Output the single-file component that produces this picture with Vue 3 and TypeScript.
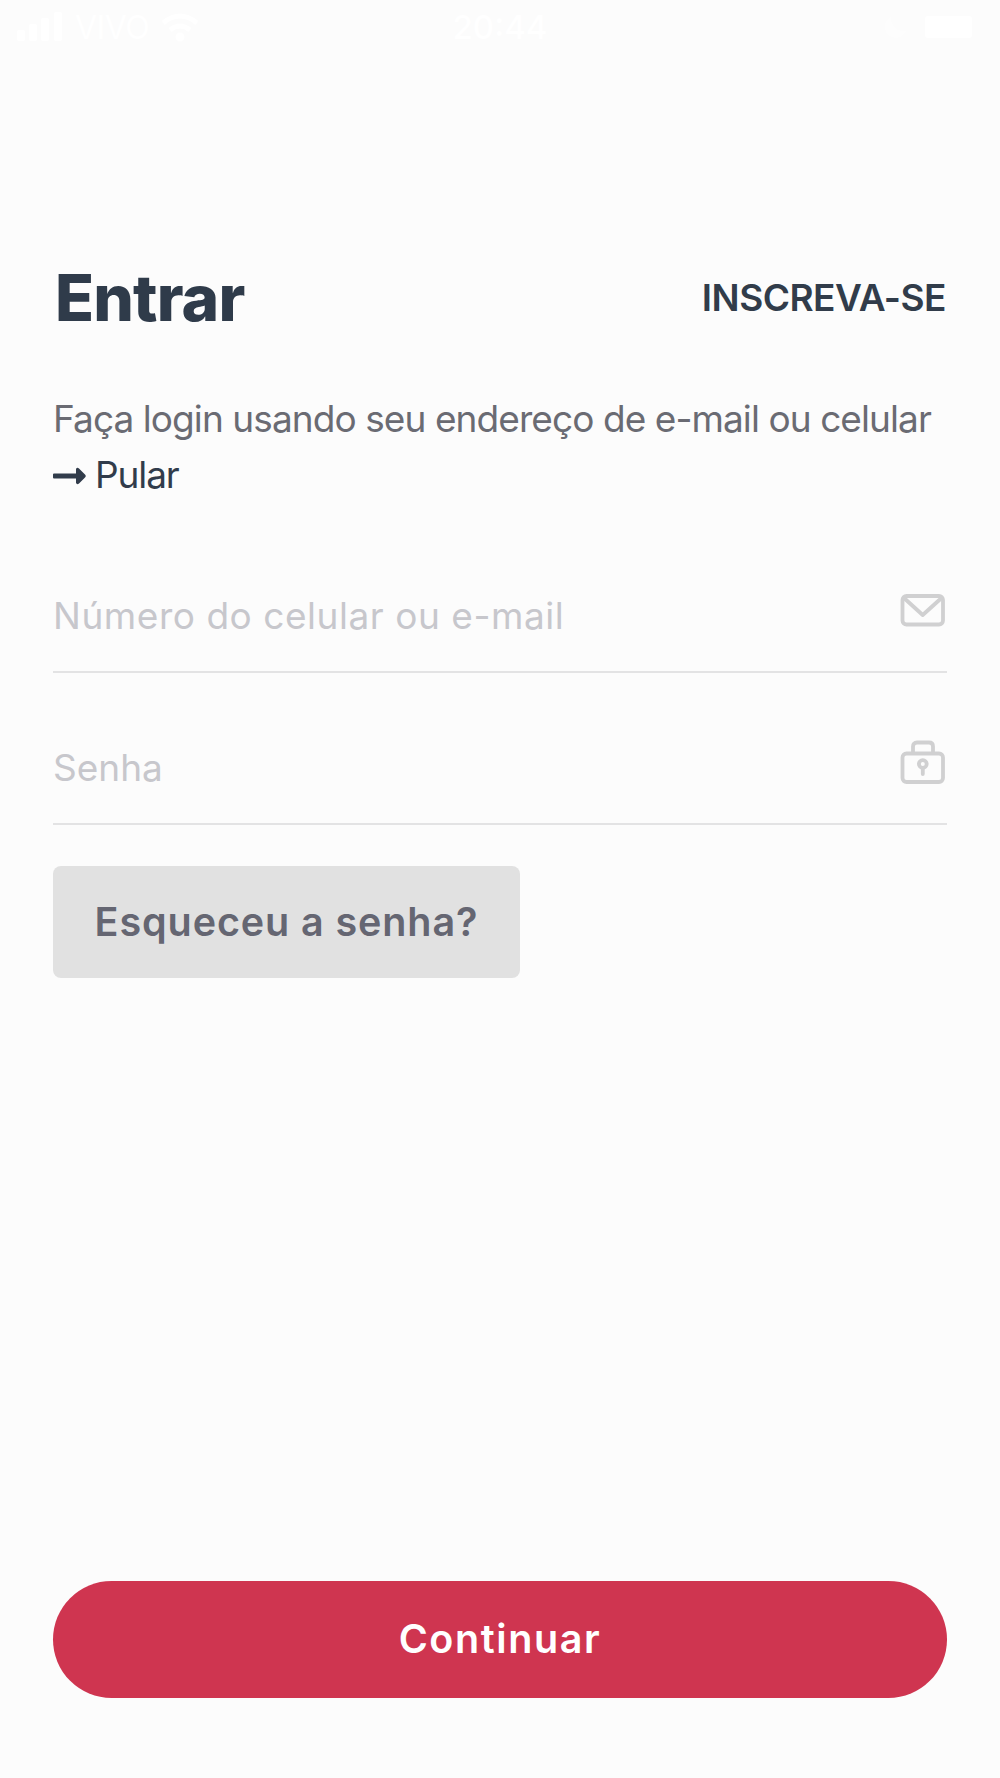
<script setup lang="ts">
import { ref } from 'vue'

const login = ref('')
const password = ref('')
</script>

<template>
  <main class="screen">
    <header class="status">
      <div class="carrier">
        <svg width="46" height="30" viewBox="0 0 46 30" fill="#fff">
          <rect x="0" y="18" width="8" height="11" rx="2" />
          <rect x="12" y="12" width="8" height="17" rx="2" />
          <rect x="24" y="6" width="8" height="23" rx="2" />
          <rect x="37" y="0" width="8" height="29" rx="2" />
        </svg>
        <span class="name">VIVO</span>
        <svg width="38" height="29" viewBox="0 0 38 29" fill="none" stroke="#fff" stroke-width="5">
          <path d="M2 10Q19-4 36 10" />
          <path d="M9 17Q19 9 29 17" />
          <circle cx="19" cy="24" r="2" fill="#fff" />
        </svg>
      </div>
      <span class="clock">20:44</span>
      <div class="power">
        <svg width="90" height="30" viewBox="0 0 90 30" fill="#fff">
          <path d="M6 5A11 11 0 1 0 21 19A13 13 0 0 1 6 5Z" opacity=".4" />
          <rect x="40" y="4" width="47" height="22" rx="3" />
        </svg>
      </div>
    </header>

    <section class="heading">
      <h1>Entrar</h1>
      <a class="signup">INSCREVA-SE</a>
    </section>

    <p class="intro">Faça login usando seu endereço de e-mail ou celular</p>
    <a class="skip">
      <svg width="33" height="18" viewBox="0 0 33 18" fill="#313c4b">
        <path d="M1 6.500H23V2Q24 0 26 1.500L32 7.500Q33.500 9 32 10.500L26 16.500Q24 18 23 16V11.500H1Q0 11.500 0 10.500V7.500Q0 6.500 1 6.500Z" />
      </svg>
      <span>Pular</span>
    </a>

    <label class="field">
      <input v-model="login" class="login" type="text" placeholder="Número do celular ou e-mail" />
      <svg class="icon" width="46" height="46" viewBox="0 0 46 46" fill="none" stroke="#d0d0d1" stroke-width="3.800" stroke-linejoin="round">
        <rect x="2.500" y="9" width="40.500" height="28.500" rx="4" />
        <path d="M4 11L22.700 28L41.500 11" />
      </svg>
    </label>
    <label class="field">
      <input v-model="password" type="password" placeholder="Senha" />
      <svg class="icon" width="46" height="46" viewBox="0 0 46 46" fill="none" stroke="#d0d0d1" stroke-width="3.800" stroke-linecap="round">
        <rect x="2.500" y="14.500" width="40.500" height="28.500" rx="4" />
        <path d="M13 14V7.500Q13 3.500 17 3.500H29Q33 3.500 33 7.500V14" />
        <circle cx="22.800" cy="25" r="3.900" />
        <path d="M22.800 30V35" />
      </svg>
    </label>

    <button class="forgot" type="button"><span>Esqueceu a senha?</span></button>
    <button class="submit" type="button"><span>Continuar</span></button>
  </main>
</template>

<style>
body {
  margin: 0;
  background: #fcfcfc;
}
</style>

<style scoped>
.screen {
  box-sizing: border-box;
  width: 1000px;
  height: 1778px;
  padding: 0 53px 80px;
  display: flex;
  flex-direction: column;
  background: #fcfcfc;
  font-family: Inter, "Open Sans", sans-serif;
  overflow: hidden;
}
.status {
  display: grid;
  grid-template-columns: 1fr auto 1fr;
  align-items: center;
  height: 54px;
  margin: 0 -36px;
  color: #fff;
}
.carrier {
  display: flex;
  align-items: center;
  gap: 12px;
}
.name {
  width: 74px;
  font-size: 32px;
  letter-spacing: -0.5px;
}
.clock {
  font-size: 33px;
  font-weight: 500;
}
.power {
  display: flex;
  justify-content: flex-end;
  padding-right: 8px;
}
.heading {
  display: flex;
  justify-content: space-between;
  align-items: center;
  height: 80px;
  margin-top: 204px;
}
h1 {
  margin: 0 0 0 2px;
  font-size: 64px;
  line-height: 80px;
  font-weight: 800;
  letter-spacing: -0.8px;
  color: #2f3b4a;
}
.signup {
  padding-right: 1px;
  font-size: 37px;
  line-height: 80px;
  font-weight: 600;
  letter-spacing: -0.5px;
  color: #313c4a;
}
.intro {
  margin: 53px 0 0;
  font-size: 37px;
  line-height: 56px;
  letter-spacing: -0.92px;
  white-space: nowrap;
  color: #6a6b73;
}
.skip {
  display: flex;
  align-items: center;
  gap: 9px;
  height: 56px;
  font-size: 37px;
  line-height: 56px;
  letter-spacing: -1.1px;
  color: #313c4b;
}
.skip svg {
  position: relative;
  top: 1px;
}
.field {
  box-sizing: border-box;
  display: flex;
  align-items: center;
  height: 152px;
  padding-top: 38px;
  border-bottom: 2px solid #e3e3e4;
}
.skip + .field {
  height: 170px;
  padding-top: 56px;
}
input {
  flex: 1;
  min-width: 0;
  padding: 2px 0 0;
  border: 0;
  outline: 0;
  background: transparent;
  font-family: inherit;
  font-size: 37px;
  line-height: 56px;
  height: 56px;
}
.login {
  letter-spacing: 0.54px;
}
input::placeholder {
  color: #c7c7cc;
  opacity: 1;
}
.icon {
  flex: none;
  margin: 0 1px 10px 0;
}
button {
  padding: 0;
  border: 0;
  font-family: inherit;
  font-weight: 600;
  font-size: 39.500px;
  letter-spacing: 0.9px;
}
.forgot {
  width: 467px;
  height: 112px;
  margin-top: 41px;
  border-radius: 8px;
  background: #e1e1e1;
  color: #656672;
}
.submit {
  height: 117px;
  margin-top: auto;
  padding-bottom: 2px;
  border-radius: 59px;
  background: #cf3550;
  color: #fff;
  letter-spacing: 1.6px;
}
</style>
